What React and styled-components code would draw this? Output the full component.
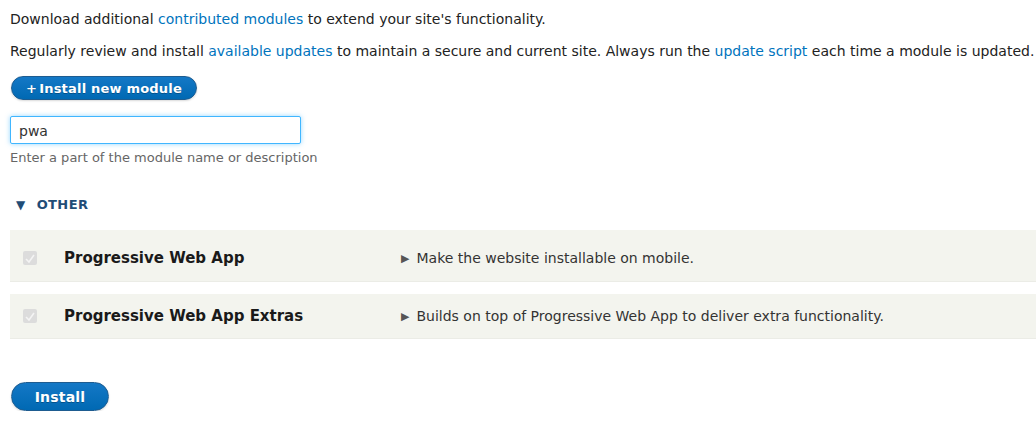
import React, { useState } from "react";
import styled, { createGlobalStyle } from "styled-components";

const GlobalStyle = createGlobalStyle`
  html, body {
    margin: 0;
    padding: 0;
    background: #ffffff;
  }
  body {
    font-family: "DejaVu Sans", "Liberation Sans", sans-serif;
    color: #222222;
  }
`;

const Page = styled.div`
  width: 1036px;
  padding: 0 0 0 10px;
  box-sizing: border-box;
`;

const Intro = styled.p`
  margin: 0;
  font-size: 14px;
  line-height: 18px;
  color: #222;
  padding-top: ${(p) => p.$top || 0}px;
`;

const Link = styled.a`
  color: #0074bd;
  text-decoration: none;
`;

const PillButton = styled.button`
  display: inline-flex;
  align-items: center;
  justify-content: center;
  gap: 2px;
  height: ${(p) => p.$h}px;
  width: ${(p) => p.$w}px;
  padding: 0;
  border: 1px solid #1e5c90;
  border-radius: 20px;
  background: linear-gradient(#1478c6, #0069b3);
  color: #ffffff;
  font-family: "DejaVu Sans", sans-serif;
  font-weight: bold;
  font-size: ${(p) => p.$fs}px;
  letter-spacing: 0.2px;
  text-shadow: 0 1px 0 rgba(0, 0, 0, 0.25);
  box-shadow: 0 1px 2px rgba(0, 0, 0, 0.15);
  cursor: pointer;
`;

const ActionRow = styled.div`
  margin-top: 16px;
  padding-left: 1px;
`;

const FilterBlock = styled.div`
  margin-top: 16px;
`;

const SearchInput = styled.input`
  box-sizing: border-box;
  width: 291px;
  height: 28px;
  padding: 2px 8px 0;
  border: 1px solid #40b6ff;
  border-radius: 2px;
  box-shadow: 0 0 5px rgba(64, 182, 255, 0.55);
  outline: none;
  font-family: "DejaVu Sans", sans-serif;
  font-size: 14px;
  color: #333;
  text-decoration: underline wavy #e0433b;
  text-decoration-thickness: 1px;
  text-underline-offset: 3px;
`;

const Hint = styled.div`
  margin-top: 5px;
  font-size: 13px;
  line-height: 17px;
  color: #666;
`;

const GroupTitle = styled.div`
  margin-top: 30px;
  padding-left: 6px;
  display: flex;
  align-items: center;
  gap: 11px;
  font-size: 13px;
  line-height: 18px;
  font-weight: bold;
  color: #1f4d77;
  letter-spacing: 0.4px;
`;

const Triangle = styled.span`
  font-size: 12px;
`;

const ModuleTable = styled.div`
  margin-top: 16px;
  display: flex;
  flex-direction: column;
`;

const ModuleRow = styled.div`
  box-sizing: border-box;
  display: grid;
  grid-template-columns: 54px 337px 1fr;
  align-items: center;
  height: ${(p) => p.$h}px;
  padding-top: ${(p) => p.$pad || 0}px;
  background: #f3f4ee;
  border-bottom: 1px solid #ebece6;
  margin-bottom: ${(p) => p.$gap || 0}px;
`;

const Check = styled.span`
  margin-left: 13px;
  width: 14px;
  height: 14px;
  border-radius: 2px;
  background: #dcdcdc;
  display: flex;
  align-items: center;
  justify-content: center;
`;

const ModuleName = styled.div`
  font-size: 15px;
  font-weight: bold;
  color: #1a1a1a;
`;

const ModuleDesc = styled.div`
  font-size: 14px;
  color: #333;
  display: flex;
  align-items: center;
  gap: 7px;
`;

const SmallArrow = styled.span`
  font-size: 11px;
  color: #555;
`;

const Footer = styled.div`
  margin-top: 43px;
  padding-left: 1px;
`;

const modules = [
  {
    name: "Progressive Web App",
    desc: "Make the website installable on mobile.",
    h: 52,
    pad: 5,
    gap: 12,
  },
  {
    name: "Progressive Web App Extras",
    desc: "Builds on top of Progressive Web App to deliver extra functionality.",
    h: 45,
    pad: 0,
    gap: 0,
  },
];

const CheckMark = () => (
  <svg width="10" height="9" viewBox="0 0 10 9">
    <path d="M1 5 L4 8 L9 1" fill="none" stroke="#f4f4f4" strokeWidth="1.6" />
  </svg>
);

export default function App() {
  const [query, setQuery] = useState("pwa");

  return (
    <Page>
      <GlobalStyle />
      <Intro $top={10}>
        Download additional <Link href="#">contributed modules</Link> to extend
        your site's functionality.
      </Intro>
      <Intro $top={14}>
        Regularly review and install <Link href="#">available updates</Link> to
        maintain a secure and current site. Always run the{" "}
        <Link href="#">update script</Link> each time a module is updated.
      </Intro>

      <ActionRow>
        <PillButton $w={186} $h={24} $fs={13}>
          <span>+</span>Install new module
        </PillButton>
      </ActionRow>

      <FilterBlock>
        <SearchInput
          type="text"
          value={query}
          onChange={(e) => setQuery(e.target.value)}
        />
        <Hint>Enter a part of the module name or description</Hint>
      </FilterBlock>

      <GroupTitle>
        <Triangle>▼</Triangle>
        OTHER
      </GroupTitle>

      <ModuleTable>
        {modules.map((m) => (
          <ModuleRow key={m.name} $h={m.h} $pad={m.pad} $gap={m.gap}>
            <Check>
              <CheckMark />
            </Check>
            <ModuleName>{m.name}</ModuleName>
            <ModuleDesc>
              <SmallArrow>▶</SmallArrow>
              {m.desc}
            </ModuleDesc>
          </ModuleRow>
        ))}
      </ModuleTable>

      <Footer>
        <PillButton $w={98} $h={29} $fs={14}>
          Install
        </PillButton>
      </Footer>
    </Page>
  );
}
